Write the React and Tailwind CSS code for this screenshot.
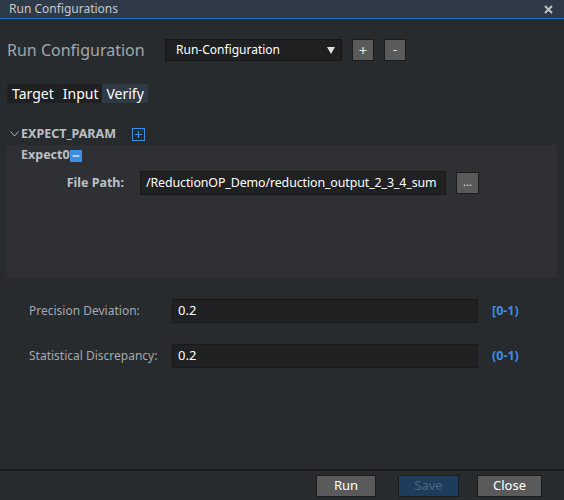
import React from 'react';

function SmallButton({ children, className = '' }) {
  return (
    <button
      className={`flex items-center justify-center border border-[#1b1c1e] bg-[#5a5a5a] text-[#e8e8e8] ${className}`}
    >
      {children}
    </button>
  );
}

function RangeRow({ label, value, range }) {
  return (
    <div className="flex items-center h-[24px]">
      <div className="w-[172px] shrink-0 pl-[29px] whitespace-nowrap text-[12px] text-[#a3a9b0]">{label}</div>
      <div className="w-[306px] shrink-0 h-[24px] bg-[#202123] border border-[#18191a] flex items-center pl-[5px] text-[13px] text-white">
        {value}
      </div>
      <div className="ml-[14px] text-[12.5px] font-bold text-[#3a8ee6]">{range}</div>
    </div>
  );
}

export default function App() {
  return (
    <div
      className="w-[564px] h-[500px] bg-[#282b2e] flex flex-col overflow-hidden"
      style={{ fontFamily: '"Noto Sans", "Open Sans", sans-serif' }}
    >
      {/* title bar */}
      <div className="h-[19px] bg-[#2e3a48] border-b border-[#1f6fc0] flex items-center justify-between pl-[9px] pr-[11px] shrink-0">
        <span className="text-[12px] leading-none text-[#c4c8cc]">Run Configurations</span>
        <svg width="9" height="9" viewBox="0 0 9 9">
          <path d="M1 1L8 8M8 1L1 8" stroke="#c0c0c0" strokeWidth="2" />
        </svg>
      </div>

      {/* run configuration row */}
      <div className="flex items-center mt-[20px] h-[22px] pl-[7px]">
        <div className="w-[158px] shrink-0 text-[16px] text-[#a3a7ab]">Run Configuration</div>
        <div className="w-[177px] h-[22px] bg-[#1f2022] border border-[#141516] flex items-center justify-between pl-[10px] pr-[6px]">
          <span className="text-[12px] text-white">Run-Configuration</span>
          <svg width="8" height="7" viewBox="0 0 8 7">
            <path d="M0 0H8L4 7Z" fill="#e0e0e0" />
          </svg>
        </div>
        <SmallButton className="ml-[10px] w-[22px] h-[22px] text-[15px]">+</SmallButton>
        <SmallButton className="ml-[10px] w-[22px] h-[22px] text-[13px]">-</SmallButton>
      </div>

      {/* tabs */}
      <div className="flex mt-[23px] ml-[7px] h-[19px] text-[14px] text-white leading-[19px]">
        <div className="px-[5px] bg-[#1f2022] rounded-t-[2px]">Target</div>
        <div className="px-[4px] bg-[#1f2022] rounded-t-[2px]">Input</div>
        <div className="px-[4px] bg-[#2f3a47] rounded-t-[2px]">Verify</div>
      </div>

      {/* expect param */}
      <div className="flex items-center mt-[24px] ml-[10px] h-[14px]">
        <svg width="9" height="6" viewBox="0 0 9 6">
          <path d="M0.5 0.5L4.5 5L8.5 0.5" stroke="#b0b4b8" fill="none" strokeWidth="1" />
        </svg>
        <span className="ml-[2px] text-[12.5px] font-bold text-[#bcc0c4]">EXPECT_PARAM</span>
        <svg className="ml-[16px]" width="13" height="13" viewBox="0 0 13 13">
          <rect x="0.5" y="0.5" width="12" height="12" fill="none" stroke="#3a8ee6" />
          <path d="M3 6.5H10M6.5 3V10" stroke="#3a8ee6" strokeWidth="1.2" />
        </svg>
      </div>

      <div className="mx-[7px] mt-[4px] h-[133px] bg-[#2e3033] flex flex-col">
        <div className="flex items-center ml-[14px] mt-[4px] h-[13px]">
          <span className="text-[12.5px] font-bold text-[#bcc0c4]">Expect0</span>
          <svg width="12" height="12" viewBox="0 0 12 12">
            <rect width="12" height="12" fill="#3a8ee6" />
            <path d="M2.5 6H9.5" stroke="#ffffff" strokeWidth="1.2" />
          </svg>
        </div>
        <div className="flex items-center mt-[9px] h-[24px]">
          <div className="w-[117px] shrink-0 text-right text-[12.5px] font-bold text-[#bcc0c4]">File Path:</div>
          <div className="ml-[16px] w-[306px] shrink-0 h-[24px] bg-[#202123] border border-[#18191a] flex items-center pl-[5px] overflow-hidden whitespace-nowrap text-[12.4px] tracking-[-0.1px] text-white">
            /ReductionOP_Demo/reduction_output_2_3_4_sum
          </div>
          <SmallButton className="ml-[10px] w-[23px] h-[22px] text-[11px] leading-none pb-[3px]">...</SmallButton>
        </div>
      </div>

      {/* ranges */}
      <div className="flex flex-col gap-[21px] mt-[21px]">
        <RangeRow label="Precision Deviation:" value="0.2" range="[0-1)" />
        <RangeRow label="Statistical Discrepancy:" value="0.2" range="(0-1)" />
      </div>

      {/* footer */}
      <div className="mt-auto border-t-2 border-[#1b1c1e] h-[31px] flex items-center justify-end pr-[22px]">
        <button className="w-[60px] h-[22px] bg-[#5a5a5a] border border-[#1b1c1e] text-[13px] text-white">Run</button>
        <button className="ml-[22px] w-[61px] h-[22px] bg-[#1e3d5c] border border-[#1b1c1e] text-[13px] text-[#4a6581]">Save</button>
        <button className="ml-[18px] w-[65px] h-[22px] bg-[#5a5a5a] border border-[#1b1c1e] text-[13px] text-white">Close</button>
      </div>
    </div>
  );
}
